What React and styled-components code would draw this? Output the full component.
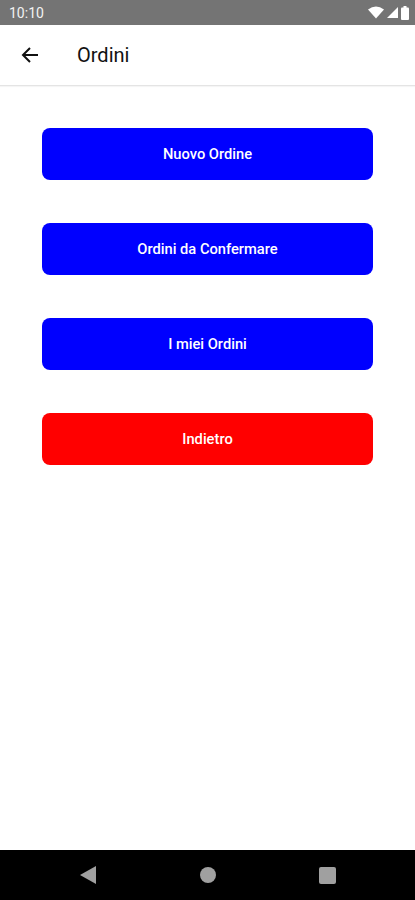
import React from 'react'
import styled, { createGlobalStyle } from 'styled-components'

const GlobalStyle = createGlobalStyle`
    html, body {
        margin: 0;
        padding: 0;
        background: #ffffff;
        font-family: Roboto, "Noto Sans", sans-serif;
    }
`

const Screen = styled.div`
    width: 415px;
    height: 900px;
    display: flex;
    flex-direction: column;
    background: #ffffff;
    overflow: hidden;
`

const StatusBar = styled.div`
    height: 25px;
    flex-shrink: 0;
    background: #747474;
    display: flex;
    align-items: center;
    justify-content: space-between;
    padding: 0 6px 0 9px;
    color: #f2f2f2;
    font-size: 14px;
`

const StatusIcons = styled.div`
    display: flex;
    align-items: center;
    gap: 3px;
`

const AppBar = styled.div`
    height: 60px;
    flex-shrink: 0;
    display: flex;
    align-items: center;
    border-bottom: 1px solid #e4e4e4;
    box-shadow: 0 1px 1px rgba(0, 0, 0, 0.04);
`

const BackButton = styled.div`
    width: 60px;
    height: 60px;
    display: flex;
    align-items: center;
    justify-content: center;
`

const Title = styled.h1`
    margin: 0 0 0 17px;
    font-size: 20px;
    font-weight: 400;
    color: #111111;
`

const Content = styled.div`
    flex: 1;
    display: flex;
    flex-direction: column;
    gap: 43px;
    padding: 42px 42px 0 42px;
`

const ActionButton = styled.button`
    height: 52px;
    width: 331px;
    border: none;
    border-radius: 8px;
    background: ${p => p.color};
    color: #ffffff;
    font-family: Roboto, "Noto Sans", sans-serif;
    font-size: 14.7px;
    font-weight: 500;
    cursor: pointer;
`

const NavBar = styled.div`
    height: 50px;
    flex-shrink: 0;
    background: #000000;
    display: flex;
    align-items: center;
    justify-content: space-between;
    padding: 0 79px 0 80px;
`

const buttons = [
    { label: 'Nuovo Ordine', color: '#0000ff' },
    { label: 'Ordini da Confermare', color: '#0000ff' },
    { label: 'I miei Ordini', color: '#0000ff' },
    { label: 'Indietro', color: '#ff0000' },
]

export default function App() {
    return (
        <Screen>
            <GlobalStyle />
            <StatusBar>
                <span>10:10</span>
                <StatusIcons>
                    <svg width="16" height="13" viewBox="0 0 16 13">
                        <path d="M0 3.5 Q8 -2.5 16 3.5 L8 12.5 Z" fill="#ffffff" />
                    </svg>
                    <svg width="11" height="11" viewBox="0 0 11 11">
                        <path d="M11 0 L11 11 L0 11 Z" fill="#ffffff" />
                    </svg>
                    <svg width="8" height="14" viewBox="0 0 8 14">
                        <rect x="2.5" y="0" width="3" height="2" fill="#ffffff" />
                        <rect x="0" y="1.5" width="8" height="12.5" rx="1" fill="#ffffff" />
                    </svg>
                </StatusIcons>
            </StatusBar>
            <AppBar>
                <BackButton>
                    <svg width="18" height="18" viewBox="0 0 18 18">
                        <path d="M17 9 H2 M9 2 L2 9 L9 16" stroke="#111111" strokeWidth="2" fill="none" />
                    </svg>
                </BackButton>
                <Title>Ordini</Title>
            </AppBar>
            <Content>
                {buttons.map(b => (
                    <ActionButton key={b.label} color={b.color}>{b.label}</ActionButton>
                ))}
            </Content>
            <NavBar>
                <svg width="16" height="18" viewBox="0 0 16 18">
                    <path d="M16 0 L16 18 L0 9 Z" fill="#a0a0a0" />
                </svg>
                <svg width="16" height="16" viewBox="0 0 16 16">
                    <circle cx="8" cy="8" r="8" fill="#a0a0a0" />
                </svg>
                <svg width="17" height="17" viewBox="0 0 17 17">
                    <rect width="17" height="17" rx="2" fill="#a0a0a0" />
                </svg>
            </NavBar>
        </Screen>
    )
}
